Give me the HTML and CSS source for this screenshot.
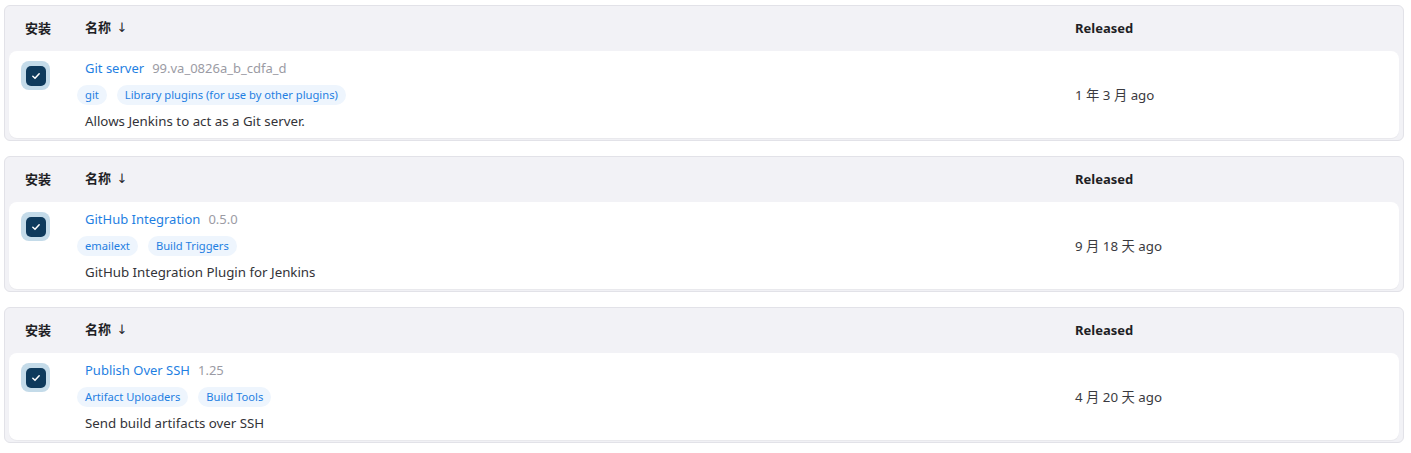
FILE: index.html
```html
<!DOCTYPE html>
<html lang="zh">
<head>
<meta charset="utf-8">
<title>Plugins</title>
<link rel="stylesheet" href="styles.css">
</head>
<body>
<div class="list">
  <div class="tbl">
    <div class="thead">
      <div class="th th-install">安装</div>
      <div class="th">名称 <span class="arrow">↓</span></div>
      <div class="th">Released</div>
    </div>
    <div class="row">
      <div class="cell-check"><span class="cb"><svg viewBox="0 0 12 12" width="10" height="10"><path d="M2.2 6.3 L4.8 8.8 L9.8 3.4" fill="none" stroke="#fff" stroke-width="1.8" stroke-linecap="round" stroke-linejoin="round"/></svg></span></div>
      <div class="cell-name">
        <div class="title"><a class="name">Git server</a><span class="ver">99.va_0826a_b_cdfa_d</span></div>
        <div class="tags"><span class="tag">git</span><span class="tag">Library plugins (for use by other plugins)</span></div>
        <div class="desc">Allows Jenkins to act as a Git server.</div>
      </div>
      <div class="cell-date">1 年 3 月 ago</div>
    </div>
  </div>

  <div class="tbl">
    <div class="thead">
      <div class="th th-install">安装</div>
      <div class="th">名称 <span class="arrow">↓</span></div>
      <div class="th">Released</div>
    </div>
    <div class="row">
      <div class="cell-check"><span class="cb"><svg viewBox="0 0 12 12" width="10" height="10"><path d="M2.2 6.3 L4.8 8.8 L9.8 3.4" fill="none" stroke="#fff" stroke-width="1.8" stroke-linecap="round" stroke-linejoin="round"/></svg></span></div>
      <div class="cell-name">
        <div class="title"><a class="name">GitHub Integration</a><span class="ver">0.5.0</span></div>
        <div class="tags"><span class="tag">emailext</span><span class="tag">Build Triggers</span></div>
        <div class="desc">GitHub Integration Plugin for Jenkins</div>
      </div>
      <div class="cell-date">9 月 18 天 ago</div>
    </div>
  </div>

  <div class="tbl">
    <div class="thead">
      <div class="th th-install">安装</div>
      <div class="th">名称 <span class="arrow">↓</span></div>
      <div class="th">Released</div>
    </div>
    <div class="row">
      <div class="cell-check"><span class="cb"><svg viewBox="0 0 12 12" width="10" height="10"><path d="M2.2 6.3 L4.8 8.8 L9.8 3.4" fill="none" stroke="#fff" stroke-width="1.8" stroke-linecap="round" stroke-linejoin="round"/></svg></span></div>
      <div class="cell-name">
        <div class="title"><a class="name">Publish Over SSH</a><span class="ver">1.25</span></div>
        <div class="tags"><span class="tag">Artifact Uploaders</span><span class="tag">Build Tools</span></div>
        <div class="desc">Send build artifacts over SSH</div>
      </div>
      <div class="cell-date">4 月 20 天 ago</div>
    </div>
  </div>
</div>
</body>
</html>
```

FILE: styles.css
```css
* { box-sizing: border-box; }
html, body { background: #ffffff; }
body {
  margin: 0;
  padding: 5px 7px 0 4px;
  font-family: "Noto Sans", "Noto Sans CJK SC", sans-serif;
  color: #1f1f25;
  font-size: 14px;
}
.list {
  display: flex;
  flex-direction: column;
  gap: 15px;
}
.tbl {
  border: 1px solid #e2e2e8;
  border-radius: 6px;
  background: #f2f2f6;
  padding: 0 4px 2px 4px;
}
.thead, .row {
  display: grid;
  grid-template-columns: 76px 1fr 324px;
}
.thead {
  height: 45px;
  align-items: center;
  padding-bottom: 2px;
}
.th {
  font-size: 13px;
  font-weight: 700;
  color: #1f1f25;
  line-height: 18px;
}
.th-install { padding-left: 16px; }
.arrow {
  font-family: "DejaVu Sans", sans-serif;
  font-weight: 400;
  font-size: 13px;
  color: #2a2a30;
  margin-left: 2px;
}
.row {
  background: #ffffff;
  border-radius: 8px;
  height: 87px;
  box-shadow: 0 1px 1px rgba(0,0,0,0.04);
}
.cell-check {
  padding-left: 12px;
  padding-top: 10px;
}
.cb {
  display: flex;
  align-items: center;
  justify-content: center;
  width: 29px;
  height: 29px;
  border-radius: 8px;
  background: #c4dbe9;
}
.cb svg {
  box-sizing: content-box;
  padding: 5px;
  background: #0e3a5c;
  border-radius: 5px;
}
.cell-name {
  padding-top: 7px;
}
.title {
  display: flex;
  align-items: baseline;
  gap: 8px;
  line-height: 20px;
}
.name {
  color: #1f7fe2;
  font-size: 13px;
  text-decoration: none;
}
.ver {
  color: #9b9ba4;
  font-size: 13px;
}
.tags {
  display: flex;
  gap: 10px;
  margin: 7px 0 0 -8px;
}
.tag {
  height: 20px;
  line-height: 20px;
  padding: 0 8px;
  border-radius: 10px;
  background: #eef5fd;
  color: #1f7fe2;
  font-size: 11.2px;
}
.desc {
  margin-top: 6px;
  line-height: 20px;
  color: #333338;
  font-size: 13.3px;
}
.cell-date {
  align-self: center;
  color: #3a3a40;
  font-size: 13.3px;
}
```
